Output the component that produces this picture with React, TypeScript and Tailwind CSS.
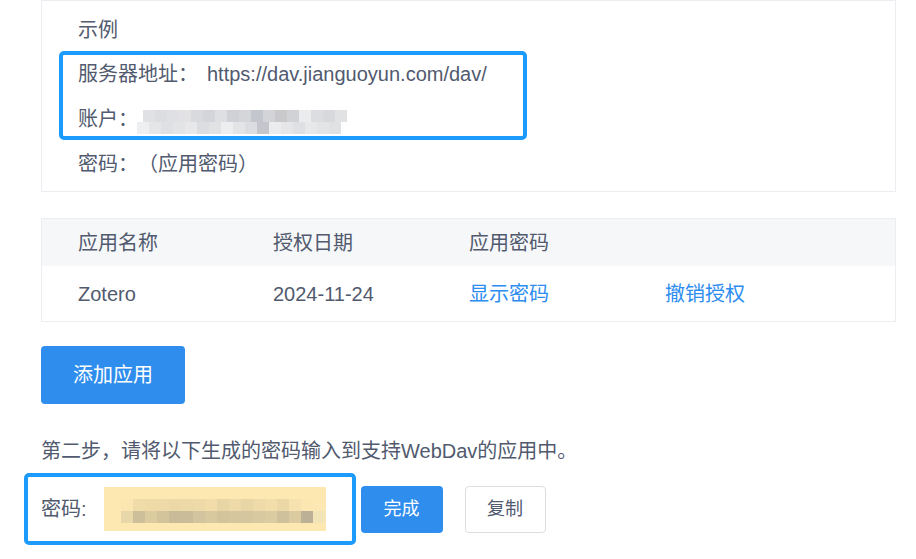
import React from "react";

const acc1 = ["#e0e1e5","#dcdde1","#dfe0e3","#e2e2e4","#d9dadd","#d3d5da","#dedfe2","#cfd1d6","#d5d6d9","#c3c6cc","#d2d4d8","#c9c9cb","#d0d2d6","#ebecee","#dcdde0","#d8d9dc","#e1e2e4"];
const acc2 = ["#eeeff0","#e5e6e8","#dfe0e3","#e3e4e6","#e8e8ea","#dcdde0","#e1e2e4","#eceef0","#e3e4e6","#dcdde0","#c4c6cc","#eaecee","#e6e6e8","#dfe0e3","#e7e8ea","#e3e4e6","#e0e1e3"];
const pw1 = ["#fbe6b1","#f0dca9","#eedaa7","#eddaa8","#ecd8a6","#ecd9a7","#eedaa8","#f2ddaa","#e8d5a5","#eedaa8","#e9d6a6","#eedba9","#f2deab","#ecd8a7","#f6e2ae","#fce7b2","#fde8b3"];
const pw2 = ["#e8d7a8","#cdbf99","#dccb9f","#d4c49b","#c8bb98","#cbbc99","#d2c49e","#d9c99f","#d4c49c","#d6c69e","#d6c69f","#d8c9a0","#dccca2","#cfc19c","#dccba1","#bcb096","#f1e4b6"];

function Blocks({ r1, r2, off1 = 0, off2 = 0 }: { r1: string[]; r2: string[]; off1?: number; off2?: number }) {
  return (
    <span className="inline-flex flex-col align-middle">
      <span className="flex" style={{ marginLeft: off1 }}>
        {r1.map((c, i) => (
          <span key={i} className="block w-[12px] h-[12px]" style={{ background: c }} />
        ))}
      </span>
      <span className="flex" style={{ marginLeft: off2 }}>
        {r2.map((c, i) => (
          <span key={i} className="block w-[12px] h-[12px]" style={{ background: c }} />
        ))}
      </span>
    </span>
  );
}

export default function App() {
  return (
    <div
      className="relative w-[916px] h-[559px] overflow-hidden bg-white text-[#515a6e] text-[20px] [text-spacing-trim:space-all]"
      style={{ fontFamily: '"Liberation Sans", "Noto Sans CJK SC", sans-serif' }}
    >
      <div className="ml-[41px] w-[855px]">
        {/* example box */}
        <div className="relative border border-[#ebedf0] h-[192px] pl-[36px] pt-[7px] leading-[44px]">
          <div>示例</div>
          <div className="flex items-center">
            <span>服务器地址：</span>
            <span className="ml-[9px]">https://dav.jianguoyun.com/dav/</span>
          </div>
          <div className="flex items-center">
            <span>账户：</span>
            <span className="-ml-[1px] mt-[2px]">
              <Blocks r1={acc1} r2={acc2} off1={6} off2={0} />
            </span>
          </div>
          <div>密码：（应用密码）</div>
          <div className="absolute left-[17px] top-[50px] w-[468px] h-[89px] border-[4px] border-[#1c9bfc] rounded-[5px]" />
        </div>

        {/* table */}
        <div className="mt-[26px] border border-[#ebedf0]">
          <div className="grid grid-cols-[195px_196px_196px_196px] pl-[36px] h-[47px] items-center bg-[#f6f7f9]">
            <div>应用名称</div>
            <div>授权日期</div>
            <div>应用密码</div>
            <div></div>
          </div>
          <div className="grid grid-cols-[195px_196px_196px_196px] pl-[36px] h-[55px] items-center">
            <div>Zotero</div>
            <div>2024-11-24</div>
            <div className="text-[#2d8cf0]">显示密码</div>
            <div className="text-[#2d8cf0]">撤销授权</div>
          </div>
        </div>

        <button className="mt-[24px] w-[144px] h-[58px] rounded-[4px] bg-[#2e8ded] text-white text-[20px]">
          添加应用
        </button>

        <div className="mt-[33px] leading-[28px]">第二步，请将以下生成的密码输入到支持WebDav的应用中。</div>

        <div className="relative mt-[20px] flex items-center h-[48px]">
          <span className="leading-[28px]">密码:</span>
          <div className="ml-[17px] w-[222px] h-[44px] bg-[#fde8b2] flex items-center pl-[17px]">
            <span className="mt-[1px]">
              <Blocks r1={pw1} r2={pw2} off1={0} off2={0} />
            </span>
          </div>
          <button className="ml-[35px] w-[82px] h-[47px] rounded-[4px] bg-[#2e8ded] text-white text-[18px]">
            完成
          </button>
          <button className="ml-[22px] w-[81px] h-[47px] rounded-[4px] border border-[#dcdee2] bg-white text-[#515a6e] text-[18px]">
            复制
          </button>
          <div className="absolute left-[-17px] top-[-12px] w-[332px] h-[72px] border-[4px] border-[#1c9bfc] rounded-[5px]" />
        </div>
      </div>
    </div>
  );
}
